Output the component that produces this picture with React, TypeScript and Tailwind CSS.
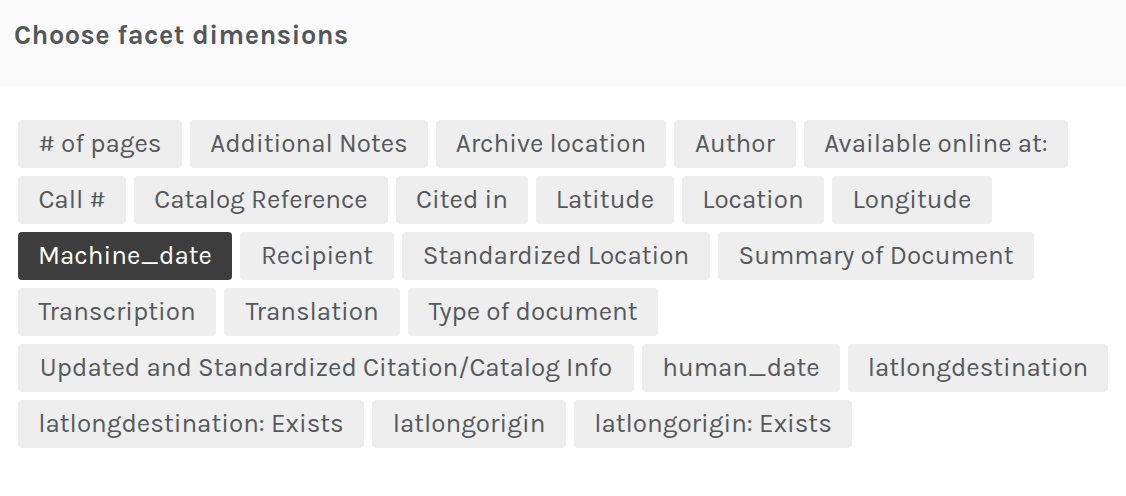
import React from "react";

const chips: { label: string; w: string; active?: boolean }[] = [
  { label: "# of pages", w: "w-[164px]" },
  { label: "Additional Notes", w: "w-[238px]" },
  { label: "Archive location", w: "w-[230px]" },
  { label: "Author", w: "w-[122px]" },
  { label: "Available online at:", w: "w-[264px]" },
  { label: "Call #", w: "w-[108px]" },
  { label: "Catalog Reference", w: "w-[254px]" },
  { label: "Cited in", w: "w-[132px]" },
  { label: "Latitude", w: "w-[138px]" },
  { label: "Location", w: "w-[142px]" },
  { label: "Longitude", w: "w-[160px]" },
  { label: "Machine_date", w: "w-[214px]", active: true },
  { label: "Recipient", w: "w-[154px]" },
  { label: "Standardized Location", w: "w-[308px]" },
  { label: "Summary of Document", w: "w-[316px]" },
  { label: "Transcription", w: "w-[198px]" },
  { label: "Translation", w: "w-[176px]" },
  { label: "Type of document", w: "w-[250px]" },
  { label: "Updated and Standardized Citation/Catalog Info", w: "w-[616px]" },
  { label: "human_date", w: "w-[198px]" },
  { label: "latlongdestination", w: "w-[260px]" },
  { label: "latlongdestination: Exists", w: "w-[346px]" },
  { label: "latlongorigin", w: "w-[194px]" },
  { label: "latlongorigin: Exists", w: "w-[278px]" },
];

export default function App() {
  return (
    <div className="w-[1126px] h-[496px] bg-white font-['Karla','Open_Sans',sans-serif]">
      <div className="h-[86px] bg-[#fafafa] px-[14px] pt-[16px]">
        <h2 className="text-[27px] leading-[38px] font-bold text-[#53575b] tracking-[0.5px]">
          Choose facet dimensions
        </h2>
      </div>
      <div className="flex flex-wrap gap-2 pl-[18px] pr-[18px] pt-[34px]">
        {chips.map((c) => (
          <div
            key={c.label}
            className={`${c.w} h-12 pb-[2px] rounded-[4px] flex items-center justify-center text-[26px] whitespace-nowrap overflow-hidden ${
              c.active ? "bg-[#3d3d3d] text-white" : "bg-[#eeeeee] text-[#55595d]"
            }`}
          >
            {c.label}
          </div>
        ))}
      </div>
    </div>
  );
}
